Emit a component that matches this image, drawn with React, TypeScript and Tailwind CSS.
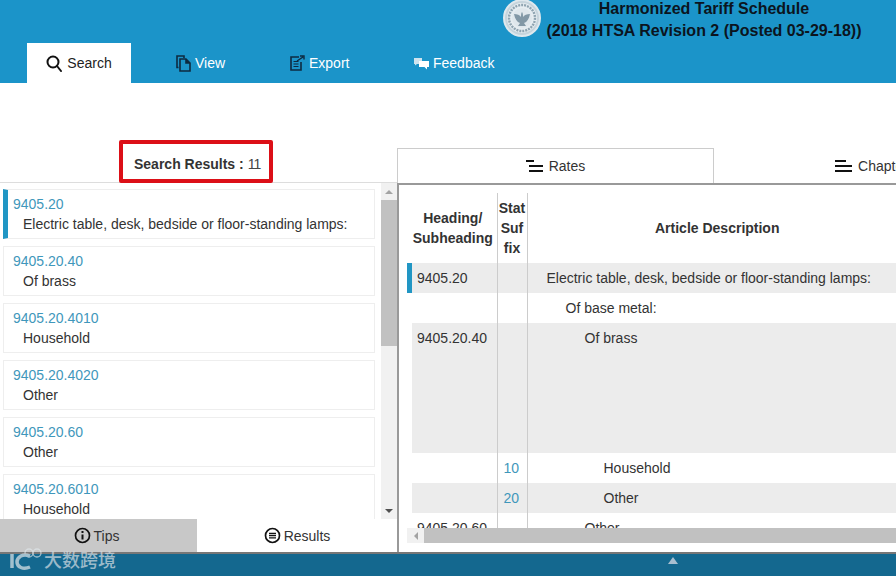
import React from "react";

const results = [
  ["9405.20", "Electric table, desk, bedside or floor-standing lamps:"],
  ["9405.20.40", "Of brass"],
  ["9405.20.4010", "Household"],
  ["9405.20.4020", "Other"],
  ["9405.20.60", "Other"],
  ["9405.20.6010", "Household"],
];

const rows = [
  { h: "9405.20", s: "", d: "Electric table, desk, bedside or floor-standing lamps:", pad: "pl-[19px]", grey: true, mark: true, tall: false },
  { h: "", s: "", d: "Of base metal:", pad: "pl-[38px]", grey: false, mark: false, tall: false },
  { h: "9405.20.40", s: "", d: "Of brass", pad: "pl-[57px]", grey: true, mark: false, tall: true },
  { h: "", s: "10", d: "Household", pad: "pl-[76px]", grey: false, mark: false, tall: false },
  { h: "", s: "20", d: "Other", pad: "pl-[76px]", grey: true, mark: false, tall: false },
  { h: "9405.20.60", s: "", d: "Other", pad: "pl-[57px]", grey: false, mark: false, tall: false },
];

function RatesIcon({ even }: { even?: boolean }) {
  return (
    <svg width="17" height="14" viewBox="0 0 17 14" className="text-[#111]">
      <rect x="0" y="1" width={even ? 11 : 8} height="2" fill="currentColor" />
      <rect x={even ? 0 : 3} y="6" width={even ? 17 : 14} height="2" fill="currentColor" />
      <rect x={even ? 0 : 3} y="11" width={even ? 17 : 14} height="2" fill="currentColor" />
    </svg>
  );
}

export default function App() {
  return (
    <div className="relative flex h-[576px] w-[896px] flex-col overflow-hidden bg-white font-['Liberation_Sans',Arial,sans-serif] text-sm text-[#333]">
      {/* Header */}
      <header className="h-[83px] shrink-0 bg-[#1b94c9]">
        <div className="flex h-[43px] pl-[503px]">
          <div className="mt-[-1px] flex h-[38px] w-[38px] shrink-0 items-center justify-center rounded-full border-[2px] border-[#dfe8ed] bg-[#c6d4dc]">
            <svg width="32" height="32" viewBox="0 0 32 32">
              <circle cx="16" cy="16" r="15" fill="#e6edf1" />
              <circle cx="16" cy="16" r="13" fill="none" stroke="#8fa4b1" strokeWidth="2.400" strokeDasharray="2 1" />
              <circle cx="16" cy="16" r="10" fill="#dfe7ec" />
              <path d="M8 12c3 0 6 1 7 3 0-2 0-4 1-5 1 1 1 3 1 5 1-2 4-3 7-3-1 5-3 8-6 9l2 3h-8l2-3c-3-1-5-4-6-9z" fill="#8298a6" />
            </svg>
          </div>
          <div className="ml-[5px] w-[316px] text-center text-base leading-[22px] font-bold text-[#0b1420]">
            <div className="mt-[-2px]">Harmonized Tariff Schedule</div>
            <div>(2018 HTSA Revision 2 (Posted 03-29-18))</div>
          </div>
        </div>
        <nav className="flex h-10 pl-[27px]">
          <div className="flex w-[104px] items-center justify-center gap-[5px] bg-white text-[#222]">
            <svg width="16" height="17" viewBox="0 0 16 17" fill="none" stroke="#111" strokeWidth="2">
              <circle cx="7" cy="7" r="5.500" />
              <path d="M11 11l4 5" strokeLinecap="round" />
            </svg>
            Search
          </div>
          <div className="ml-[45px] flex w-[60px] items-center gap-[4px] text-white">
            <svg width="15" height="17" viewBox="0 0 15 17" fill="none" stroke="#0e2a40" strokeWidth="1.600">
              <path d="M2.500 12.500H1V1h7v2" />
              <path d="M4 4h6l4 4v8H4z" />
              <path d="M10 4v4h4" fill="#0e2a40" />
            </svg>
            View
          </div>
          <div className="ml-[54px] flex w-[70px] items-center gap-[4px] text-white">
            <svg width="15" height="16" viewBox="0 0 15 16" fill="none" stroke="#0e2a40" strokeWidth="1.600">
              <path d="M9 2H1v13h10V7" />
              <path d="M3.500 6.500h5M3.500 9h5M3.500 11.500h5" strokeWidth="1.200" />
              <path d="M7 6l6-4M10 1h4v3.500" strokeWidth="1.400" />
            </svg>
            Export
          </div>
          <div className="ml-[54px] flex items-center gap-[4px] text-white">
            <svg width="15" height="13" viewBox="0 0 15 13">
              <path d="M0 1h8v6H3L1 8.500V7H0z" fill="#cfe3ee" />
              <path d="M5 4h10v6h-2v2.500L10.500 10H5z" fill="#fff" />
            </svg>
            Feedback
          </div>
        </nav>
      </header>

      {/* Body */}
      <main className="flex min-h-0 flex-1">
        {/* Left */}
        <section className="flex w-[397px] shrink-0 flex-col">
          <div className="flex h-[100px] shrink-0 items-end border-b border-[#ddd] pl-[119px]">
            <div className="mb-[-1px] flex h-[43px] w-[154px] items-center gap-[4px] rounded-[2px] border-[4px] border-[#dc0f17] pt-[5px] pl-[11px] text-[#333]">
              <b>Search Results :</b>
              <span className="tracking-[-1px] text-[#444]">11</span>
            </div>
          </div>
          <div className="flex min-h-0 flex-1">
            <ul className="flex w-[381px] shrink-0 flex-col gap-[7px] overflow-hidden pt-[6px] pr-[6px] pl-[3px]">
              {results.map(([code, text], i) => (
                <li
                  key={code}
                  className={`h-[50px] shrink-0 border border-[#eee] pt-[4px] pb-1 leading-5 ${i === 0 ? "border-l-[5px] border-l-[#2196c4] pl-[5px]" : "pl-[9px]"}`}
                >
                  <div className="text-[#3f97bb]">{code}</div>
                  <div className="pl-[10px] text-[#333]">{text}</div>
                </li>
              ))}
            </ul>
            <div className="flex w-[16px] shrink-0 flex-col bg-[#f1f1f1]">
              <div className="flex h-[17px] shrink-0 items-center justify-center">
                <div className="h-0 w-0 border-x-[4px] border-b-[4px] border-x-transparent border-b-[#a3a3a3]" />
              </div>
              <div className="h-[146px] bg-[#c1c1c1]" />
              <div className="flex-1" />
              <div className="flex h-[17px] shrink-0 items-center justify-center">
                <div className="h-0 w-0 border-x-[4px] border-t-[4px] border-x-transparent border-t-[#505050]" />
              </div>
            </div>
          </div>
          <div className="flex h-[33px] shrink-0">
            <div className="flex w-[197px] items-center justify-center gap-[3px] bg-[#c8c8c8] pr-[4px] text-[#333]">
              <svg width="17" height="17" viewBox="0 0 17 17" fill="none" stroke="#111" strokeWidth="1.700">
                <circle cx="8.500" cy="8.500" r="7" />
                <path d="M8.500 7.500v5" strokeWidth="2" />
                <path d="M8.500 4v2" strokeWidth="2" />
              </svg>
              Tips
            </div>
            <div className="flex flex-1 items-center justify-center gap-[3px] bg-white text-[#333]">
              <svg width="17" height="17" viewBox="0 0 17 17" fill="none" stroke="#111" strokeWidth="1.700">
                <circle cx="8.500" cy="8.500" r="7" />
                <path d="M5 6.500h7M5 8.700h7M5 10.900h7" strokeWidth="1.300" />
              </svg>
              Results
            </div>
          </div>
        </section>

        {/* Right */}
        <section className="flex min-w-0 flex-1 flex-col">
          <div className="mt-[65px] flex h-[35px] shrink-0">
            <div className="flex h-[35px] w-[317px] shrink-0 items-center justify-center gap-[6px] border border-b-0 border-[#ccc] bg-white text-[#333]">
              <RatesIcon />
              Rates
            </div>
            <div className="flex h-[35px] w-[317px] shrink-0 items-center justify-center gap-[6px] bg-white pr-[2px] text-[#333]">
              <RatesIcon even />
              Chapter
            </div>
          </div>
          <div className="flex min-h-0 flex-1 flex-col border-t-2 border-l-2 border-[#999] pt-2 pb-[9px] pl-2">
            <div className="min-h-0 flex-1 overflow-hidden">
              <table className="w-[700px] table-fixed border-collapse">
                <colgroup>
                  <col className="w-[90px]" />
                  <col className="w-[30px]" />
                  <col />
                </colgroup>
                <thead>
                  <tr className="h-[70px] font-bold">
                    <th className="pl-[2px] text-center leading-5">
                      Heading/
                      <br />
                      Subheading
                    </th>
                    <th className="border-x border-[#ccc] text-center leading-5">
                      Stat
                      <br />
                      Suf
                      <br />
                      fix
                    </th>
                    <th className="pr-[200px] text-center">
                      Article Description
                    </th>
                  </tr>
                </thead>
                <tbody>
                  {rows.map((r) => (
                    <tr key={r.d + r.h} className={`align-top ${r.tall ? "h-[130px]" : "h-[30px]"}`}>
                      <td className="p-0">
                        <div className={`flex ${r.tall ? "h-[130px]" : "h-[30px]"}`}>
                          <div className={`w-[5px] shrink-0 ${r.mark ? "bg-[#2196c4]" : ""}`} />
                          <div className={`flex-1 pt-[5px] pl-[5px] leading-5 ${r.grey ? "bg-[#ececec]" : ""}`}>{r.h}</div>
                        </div>
                      </td>
                      <td className={`border-x border-[#ccc] pt-[5px] pl-[6px] leading-5 text-[#3f97bb] ${r.grey ? "bg-[#ececec]" : ""}`}>{r.s}</td>
                      <td className={`pt-[5px] leading-5 ${r.pad} ${r.grey ? "bg-[#ececec]" : ""}`}>{r.d}</td>
                    </tr>
                  ))}
                </tbody>
              </table>
            </div>
            <div className="flex h-[15px] shrink-0 bg-[#f1f1f1]">
              <div className="flex w-[17px] items-center justify-center">
                <div className="h-0 w-0 border-y-[4px] border-r-[4px] border-y-transparent border-r-[#a3a3a3]" />
              </div>
              <div className="flex-1 bg-[#c1c1c1]" />
            </div>
          </div>
        </section>
      </main>

      {/* Footer */}
      <footer className="flex h-[24px] shrink-0 justify-center border-t-2 border-[#777] bg-[#14688f] pt-[3px]">
        <div className="ml-[449px] h-0 w-0 border-x-[5px] border-b-[7px] border-x-transparent border-b-[#a9bfd0]" />
      </footer>

      {/* Watermark */}
      <div className="absolute bottom-[5px] left-[9px] flex items-center gap-[1px] text-[#d5dde2] opacity-70">
        <svg width="34" height="24" viewBox="0 0 34 24" fill="none" stroke="#dfe6ea" strokeWidth="3.500">
          <path d="M3 7v14" />
          <path d="M21 9c-7-3-13 1-13 6s6 8 13 5" />
          <circle cx="20" cy="6" r="4" strokeWidth="1.300" />
          <circle cx="28" cy="6" r="4" strokeWidth="1.300" />
        </svg>
        <span className="font-['Noto_Sans_CJK_SC',sans-serif] text-[18px] leading-6 font-medium">大数跨境</span>
      </div>
    </div>
  );
}
